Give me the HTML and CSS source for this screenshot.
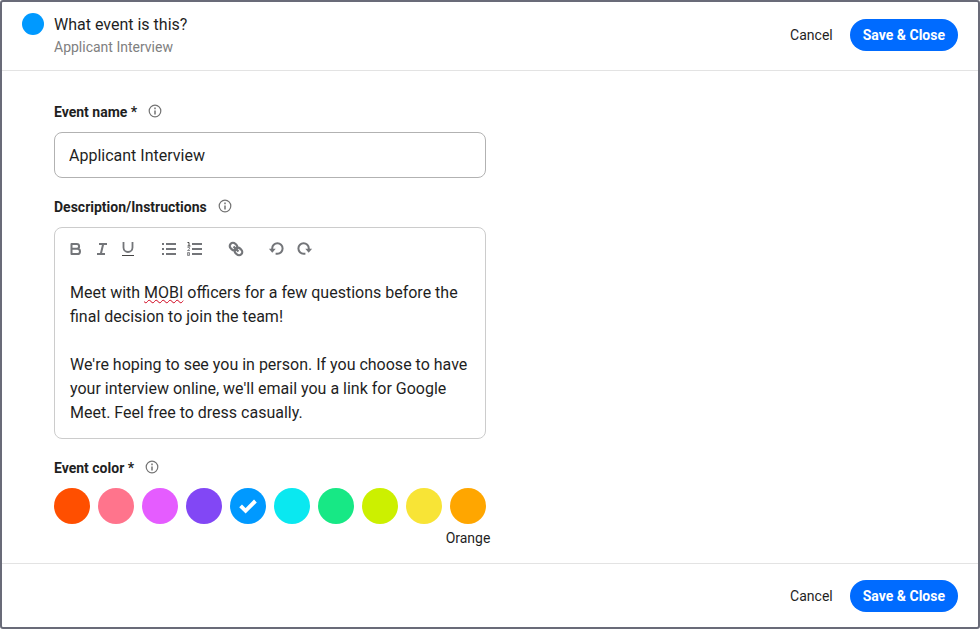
FILE: index.html
```html
<!DOCTYPE html>
<html lang="en">
<head>
<meta charset="utf-8">
<meta name="viewport" content="width=device-width, initial-scale=1">
<title>What event is this?</title>
<link rel="stylesheet" href="styles.css">
</head>
<body>
<svg class="sprite" aria-hidden="true">
  <symbol id="info" viewBox="0 0 14 14">
    <circle cx="7" cy="7" r="5.8" fill="none" stroke="currentColor" stroke-width="1.2"/>
    <path d="M7 3.6v1.6M7 6.4v4" stroke="currentColor" stroke-width="1.5" fill="none"/>
  </symbol>
  <symbol id="undo" viewBox="0 0 18 18">
    <path d="M4.2 10.2V8.5a5.2 5.2 0 1 1 5.2 5.2H7.6" fill="none" stroke="currentColor" stroke-width="2"/>
    <path d="M.9 8.8h6.800l-3.400 4z" fill="currentColor"/>
  </symbol>
</svg>
<form class="panel">
  <header class="bar bar-top">
    <span class="dot"></span>
    <div class="heading">
      <h1>What event is this?</h1>
      <p>Applicant Interview</p>
    </div>
    <div class="actions">
      <button type="button" class="cancel">Cancel</button>
      <button type="submit" class="save">Save &amp; Close</button>
    </div>
  </header>

  <main class="fields">
    <div class="field">
      <div class="label-row">
        <label for="event-name">Event name *</label>
        <svg class="info"><use href="#info"/></svg>
      </div>
      <input id="event-name" class="text-input" type="text" value="Applicant Interview">
    </div>

    <div class="field">
      <div class="label-row">
        <span class="label" id="description-label">Description/Instructions</span>
        <svg class="info"><use href="#info"/></svg>
      </div>
      <div class="editor">
        <div class="toolbar" role="toolbar" aria-label="Formatting">
          <div class="group">
            <button type="button" aria-label="Bold"><svg viewBox="0 0 18 18"><path d="M4.5 4h5.2a2.4 2.4 0 0 1 0 4.8H4.5zM4.5 8.8h5.9a2.6 2.6 0 0 1 0 5.2H4.5z" fill="none" stroke="currentColor" stroke-width="2" stroke-linejoin="round"/></svg></button>
            <button type="button" aria-label="Italic"><svg viewBox="0 0 18 18"><path d="M6 4h8M4 14h8M10.2 4l-2.400 10" fill="none" stroke="currentColor" stroke-width="2"/></svg></button>
            <button type="button" aria-label="Underline"><svg viewBox="0 0 18 18"><path d="M4.500 2v5.500a4.500 4.500 0 0 0 9 0V2" fill="none" stroke="currentColor" stroke-width="1.800"/><path d="M3 15.500h12" stroke="#444444" stroke-width="1"/></svg></button>
          </div>
          <div class="group">
            <button type="button" aria-label="Bulleted list"><svg viewBox="0 0 18 18"><path d="M6 4h10M6 9h10M6 14h10M2 4h2M2 9h2M2 14h2" stroke="currentColor" stroke-width="2"/></svg></button>
            <button type="button" aria-label="Numbered list"><svg viewBox="0 0 18 18"><path d="M6 4h10M6 9h10M6 14h10" stroke="currentColor" stroke-width="2"/><path d="M1.500 2.500H3V6M1.500 6h3" fill="none" stroke="#444444"/><path d="M1.500 7.500h2v1.500l-2 1.500h2.500M1.500 12.500h2v3h-2zM2 14h2" fill="none" stroke="currentColor" stroke-width=".8"/></svg></button>
          </div>
          <div class="group">
            <button type="button" aria-label="Link"><svg viewBox="0 0 18 18"><g transform="rotate(45 9 9)" fill="none" stroke="currentColor" stroke-width="2.200"><rect x="1.500" y="5.800" width="8" height="6.400" rx="3.200"/><rect x="8.500" y="5.800" width="8" height="6.400" rx="3.200"/><path d="M5.500 9h7"/></g></svg></button>
          </div>
          <div class="group group-history">
            <button type="button" aria-label="Undo"><svg><use href="#undo"/></svg></button>
            <button type="button" aria-label="Redo"><svg class="mirror"><use href="#undo"/></svg></button>
          </div>
        </div>
        <div class="content" contenteditable="true" spellcheck="false" role="textbox" aria-multiline="true" aria-labelledby="description-label">
          <p>Meet with <span class="misspelled">MOBI</span> officers for a few questions before the final decision to join the team!</p>
          <p>We're hoping to see you in person. If you choose to have your interview online, we'll email you a link for Google Meet. Feel free to dress casually.</p>
        </div>
      </div>
    </div>

    <div class="field" role="radiogroup" aria-labelledby="color-label">
      <div class="label-row">
        <span class="label" id="color-label">Event color *</span>
        <svg class="info"><use href="#info"/></svg>
      </div>
      <div class="swatches">
        <label class="swatch"><input class="red" type="radio" name="color" aria-label="Red"></label>
        <label class="swatch"><input class="pink" type="radio" name="color" aria-label="Pink"></label>
        <label class="swatch"><input class="magenta" type="radio" name="color" aria-label="Magenta"></label>
        <label class="swatch"><input class="purple" type="radio" name="color" aria-label="Purple"></label>
        <label class="swatch"><input class="blue" type="radio" name="color" aria-label="Blue" checked><svg class="check" viewBox="0 0 18 18"><path d="M1.600 8.800l5 5L16.400 4" fill="none" stroke="#ffffff" stroke-width="3.900"/></svg></label>
        <label class="swatch"><input class="cyan" type="radio" name="color" aria-label="Cyan"></label>
        <label class="swatch"><input class="green" type="radio" name="color" aria-label="Green"></label>
        <label class="swatch"><input class="lime" type="radio" name="color" aria-label="Lime"></label>
        <label class="swatch"><input class="yellow" type="radio" name="color" aria-label="Yellow"></label>
        <label class="swatch"><input class="orange" type="radio" name="color"><span class="tip">Orange</span></label>
      </div>
    </div>
  </main>

  <footer class="bar bar-bottom">
    <div class="actions">
      <button type="button" class="cancel">Cancel</button>
      <button type="submit" class="save">Save &amp; Close</button>
    </div>
  </footer>
</form>
</body>
</html>
```
FILE: styles.css
```css
* { box-sizing: border-box; }

body {
  margin: 0;
  background: #ffffff;
  color: #1f1f1f;
  font: 16px/24px "Proxima Nova", Roboto, "Liberation Sans", sans-serif;
}

h1, p { margin: 0; }

button, input { font: inherit; color: inherit; }

.sprite { position: absolute; width: 0; height: 0; }

.panel {
  display: flex;
  flex-direction: column;
  min-height: 100vh;
  border: 2px solid #696b78;
  border-radius: 3px;
}

.bar {
  display: flex;
  padding: 0 20px;
}

.bar-top {
  align-items: flex-start;
  gap: 10px;
  padding-top: 11px;
  padding-bottom: 13px;
  border-bottom: 1px solid #e3e3e3;
}

.bar-bottom {
  flex: 1;
  align-items: flex-start;
  justify-content: flex-end;
  padding-top: 16px;
  padding-bottom: 15px;
  border-top: 1px solid #e3e3e3;
}

.dot {
  width: 22px;
  height: 22px;
  border-radius: 50%;
  background: #0099ff;
}

.heading { flex: 1; }

.heading h1 {
  font-size: 16px;
  font-weight: 400;
}

.heading p {
  color: #808080;
  font-size: 14px;
  line-height: 20px;
}

.actions {
  display: flex;
  align-items: center;
  gap: 17px;
}

.bar-top .actions { padding-top: 6px; }

.cancel, .save {
  padding: 0;
  border: 0;
  background: none;
  font-size: 14px;
  line-height: 20px;
  cursor: pointer;
}

.save {
  height: 32px;
  padding: 0 13px;
  border-radius: 16px;
  background: #006bff;
  color: #ffffff;
  font-weight: 700;
}

.fields {
  display: flex;
  flex-direction: column;
  gap: 19px;
  max-width: 536px;
  padding: 31px 52px 39px;
}

.label-row {
  display: flex;
  align-items: flex-start;
  gap: 11px;
  margin-bottom: 10px;
  font-size: 14px;
  font-weight: 700;
  line-height: 20px;
}

.info {
  width: 14px;
  height: 14px;
  margin-top: 2px;
  color: #737373;
}

.text-input {
  display: block;
  width: 100%;
  height: 46px;
  padding: 0 14px;
  border: 1px solid #b2b2b2;
  border-radius: 8px;
  background: #ffffff;
}

.editor {
  border: 1px solid #cccccc;
  border-radius: 8px;
}

.toolbar {
  display: flex;
  gap: 15px;
  height: 42px;
  padding: 0 8px;
  align-items: center;
}

.group { display: flex; }

.group-history { gap: 1px; }

.toolbar button {
  display: flex;
  align-items: center;
  justify-content: center;
  width: 26px;
  height: 26px;
  padding: 0;
  border: 0;
  background: none;
  color: #737579;
}

.toolbar svg {
  width: 18px;
  height: 18px;
}

.mirror { transform: scaleX(-1); }

.content {
  padding: 11px 15px 13px;
  outline: 0;
}

.content p + p { margin-top: 24px; }

.misspelled {
  text-decoration: underline wavy #d0021b 1px;
  text-decoration-skip-ink: none;
}

.swatches {
  display: flex;
  gap: 8px;
}

.swatch {
  position: relative;
  width: 36px;
  height: 36px;
}

.swatch input {
  display: block;
  appearance: none;
  width: 100%;
  height: 100%;
  margin: 0;
  border-radius: 50%;
}

.check {
  position: absolute;
  inset: 9px;
  width: 18px;
  height: 18px;
}

.tip {
  position: absolute;
  top: 40px;
  left: 50%;
  transform: translateX(-50%);
  font-size: 14px;
  line-height: 20px;
}

.red { background: #ff4f00; }
.pink { background: #ff748c; }
.magenta { background: #e55cff; }
.purple { background: #8247f5; }
.blue { background: #0099ff; }
.cyan { background: #0ae8f0; }
.green { background: #17e885; }
.lime { background: #ccf000; }
.yellow { background: #f8e436; }
.orange { background: #ffa600; }
```
